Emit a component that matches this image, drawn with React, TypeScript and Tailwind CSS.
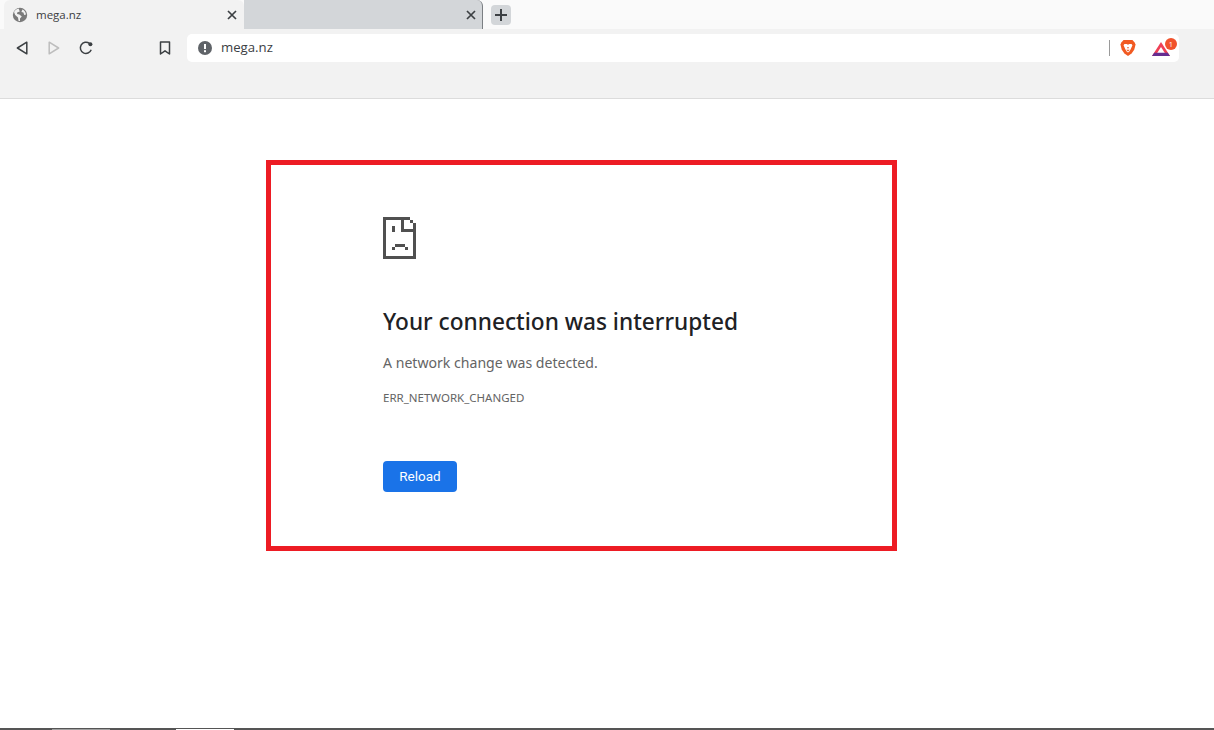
import React from "react";

const Globe = () => (
  <svg width="16" height="16" viewBox="0 0 16 16" className="shrink-0 -ml-px">
    <circle cx="8" cy="8" r="7.2" fill="#7a7a7a" />
    <path d="M6.6 1.6 C4.6 2 3 3.2 2 5 L3.2 8 L6 10.4 L6.6 14 L8 14 L8 11.4 L9.8 9.6 L7.4 7.4 L5 7 L5.4 5.2 L7.8 4.6 Z" fill="#f2f2f2" />
    <path d="M10.4 2.6 L9.4 5 L11.4 5.6 L12.2 8 L14 7.6 C13.8 5.6 12.4 3.4 10.4 2.6 Z" fill="#f2f2f2" />
  </svg>
);

const Close = () => (
  <svg width="10" height="10" viewBox="0 0 10 10" className="shrink-0">
    <path d="M1 1 L9 9 M9 1 L1 9" stroke="#3c4043" strokeWidth="1.7" />
  </svg>
);

const Tri = ({ flip, color }: { flip?: boolean; color: string }) => (
  <svg width="12" height="14" viewBox="0 0 12 14">
    <path
      d={flip ? "M1.2 1.2 L10.6 7 L1.2 12.8 Z" : "M10.8 1.2 L1.4 7 L10.8 12.8 Z"}
      fill="none"
      stroke={color}
      strokeWidth="1.5"
      strokeLinejoin="round"
    />
  </svg>
);

const SadFile = () => (
  <svg width="33" height="42" viewBox="0 0 33 42" shapeRendering="crispEdges" fill="#505050">
    <path d="M0 0 H27 V3 H30 V6 H33 V42 H0 Z M3 3 V39 H30 V15 H18 V3 Z M21 3 V12 H30 V6 H27 V3 Z" fillRule="evenodd" />
    <rect x="9" y="9" width="3" height="6" />
    <rect x="12" y="27" width="10" height="3" />
    <rect x="9" y="30" width="3" height="3" />
    <rect x="22" y="30" width="3" height="3" />
  </svg>
);

export default function App() {
  return (
    <div className="h-[730px] w-[1214px] flex flex-col overflow-hidden bg-white font-['Noto_Sans','Open_Sans',sans-serif]">
      <div className="h-[29px] flex items-stretch bg-[#fafafa] pl-[4px] shrink-0">
        <div className="w-[240px] bg-[#f2f2f2] rounded-t-[6px] flex items-center pl-[9px] pr-[6px]">
          <Globe />
          <span className="ml-[8px] text-[11.5px] text-[#3c4043] font-['Open_Sans',sans-serif]">mega.nz</span>
          <span className="ml-auto mr-[1px] flex"><Close /></span>
        </div>
        <div className="w-[239px] bg-[#d3d6d9] border-r border-[#7b7f83] rounded-tr-[6px] flex items-center justify-end pr-[6px]">
          <Close />
        </div>
        <div className="ml-[8px] mt-[5px] w-[20px] h-[20px] rounded-[4px] bg-[#d3d6d9] flex items-center justify-center">
          <svg width="14" height="14" viewBox="0 0 14 14"><path d="M7 1 V13 M1 7 H13" stroke="#3c4043" strokeWidth="2" /></svg>
        </div>
      </div>
      <div className="h-[70px] bg-[#f2f2f2] border-b border-[#dcdcdc] shrink-0 pt-[5px] pl-[16px] pr-[35px]">
        <div className="flex items-center h-[28px]">
          <Tri color="#3c4043" />
          <span className="ml-[20px] flex"><Tri flip color="#bdbdbd" /></span>
          <svg className="ml-[18px]" width="16" height="16" viewBox="0 0 16 16">
            <path d="M13.2 9.8 A5.6 5.6 0 1 1 11.4 3.4" fill="none" stroke="#3c4043" strokeWidth="1.5" />
            <circle cx="12.4" cy="4.2" r="2" fill="#3c4043" />
          </svg>
          <svg className="ml-[65px]" width="12" height="14" viewBox="0 0 12 14">
            <path d="M1.5 1 H10.5 V13 L6 9.8 L1.5 13 Z" fill="none" stroke="#3c4043" strokeWidth="1.5" strokeLinejoin="round" />
          </svg>
          <div className="ml-[16px] flex-1 h-[28px] bg-white rounded-[5px] flex items-center pl-[11px] pr-[9px]">
            <svg width="14" height="14" viewBox="0 0 14 14">
              <circle cx="7" cy="7" r="7" fill="#5f6368" />
              <rect x="6" y="3" width="2" height="5" fill="#fff" />
              <rect x="6" y="9.2" width="2" height="2" fill="#fff" />
            </svg>
            <span className="ml-[9px] text-[13.2px] text-[#3c4043] font-['Open_Sans',sans-serif]">mega.nz</span>
            <div className="ml-auto w-px h-[16px] bg-[#9a9a9a]" />
            <svg className="ml-[10px]" width="16" height="18" viewBox="0 0 18 20" preserveAspectRatio="none">
              <path d="M4 1 H14 L16.5 4 L17.5 6 L16 12 L13 16 L9 19 L5 16 L2 12 L0.5 6 L1.5 4 Z" fill="#f15a22" />
              <path d="M5 5.5 H7.5 L9 6.5 L10.5 5.5 H13 L14 7 L12 11.5 L10.5 14 L9 15 L7.5 14 L6 11.5 L4 7 Z" fill="#fff" />
              <path d="M8 9 H10 L9 11 Z M7 12 H11 L9 14 Z" fill="#f15a22" />
            </svg>
            <div className="ml-[16px] relative w-[18px] h-[16px]">
              <svg width="18" height="14" viewBox="0 0 18 14" className="mt-[2px]">
                <path d="M9 0 L18 14 H0 Z" fill="#ef4056" />
                <path d="M9 5 L13.5 12 H4.5 Z" fill="#fff" />
                <path d="M0 14 L2.2 10.8 H15.8 L18 14 Z" fill="#662d91" />
              </svg>
              <span className="absolute -top-[2px] left-[13px] w-[12px] h-[12px] rounded-full bg-[#f1522c] text-white text-[7.5px] leading-[12px] text-center font-['Open_Sans',sans-serif]">1</span>
            </div>
          </div>
        </div>
      </div>
      <div className="flex-1 min-h-0 pt-[61px] pl-[266px]">
        <div className="w-[631px] h-[391px] border-[5px] border-[#ed1c24] pl-[112px] pt-[52px]">
          <SadFile />
          <h1 className="mt-[46px] text-[22.65px] leading-[34px] font-medium text-[#202124]">Your connection was interrupted</h1>
          <p className="mt-[13px] text-[14.1px] leading-[22px] text-[#646464]">A network change was detected.</p>
          <p className="mt-[16px] text-[11.5px] leading-[16px] text-[#646464]">ERR_NETWORK_CHANGED</p>
          <button className="mt-[55px] block w-[74px] h-[31px] rounded-[4px] bg-[#1a73e8] text-white text-[13.5px] font-normal font-['Roboto',sans-serif]">Reload</button>
        </div>
      </div>
      <div className="h-[2px] bg-[#555555] flex shrink-0">
        <div className="ml-[52px] w-[58px] mt-px h-px bg-[#a0a0a0]" />
        <div className="ml-[66px] w-[58px] mt-px h-px bg-white" />
      </div>
    </div>
  );
}
